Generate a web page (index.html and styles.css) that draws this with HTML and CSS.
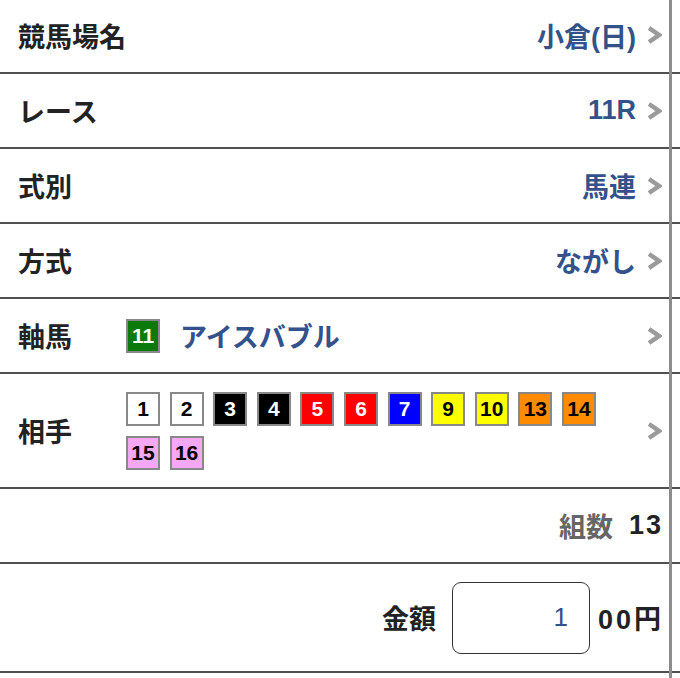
FILE: index.html
```html
<!DOCTYPE html>
<html lang="ja">
<head>
    <meta charset="UTF-8">
    <meta name="viewport" content="width=device-width, initial-scale=1.0">
    <title>投票内容</title>
    <link rel="stylesheet" href="styles.css">
</head>
<body>
    <div class="bet-form">
        <div class="row row-first">
            <span class="label">競馬場名</span>
            <span class="value">小倉(日)</span>
            <svg class="chevron" viewBox="0 0 16 20"><polyline points="3,3 13,10 3,17"/></svg>
        </div>
        <div class="row">
            <span class="label">レース</span>
            <span class="value">11R</span>
            <svg class="chevron" viewBox="0 0 16 20"><polyline points="3,3 13,10 3,17"/></svg>
        </div>
        <div class="row">
            <span class="label">式別</span>
            <span class="value">馬連</span>
            <svg class="chevron" viewBox="0 0 16 20"><polyline points="3,3 13,10 3,17"/></svg>
        </div>
        <div class="row">
            <span class="label">方式</span>
            <span class="value">ながし</span>
            <svg class="chevron" viewBox="0 0 16 20"><polyline points="3,3 13,10 3,17"/></svg>
        </div>
        <div class="row">
            <span class="label">軸馬</span>
            <div class="axis">
                <span class="num waku-6">11</span>
                <span class="horse-name">アイスバブル</span>
            </div>
            <svg class="chevron" viewBox="0 0 16 20"><polyline points="3,3 13,10 3,17"/></svg>
        </div>
        <div class="row row-partners">
            <span class="label">相手</span>
            <div class="partners">
                <span class="num waku-1">1</span>
                <span class="num waku-1">2</span>
                <span class="num waku-2">3</span>
                <span class="num waku-2">4</span>
                <span class="num waku-3">5</span>
                <span class="num waku-3">6</span>
                <span class="num waku-4">7</span>
                <span class="num waku-5">9</span>
                <span class="num waku-5">10</span>
                <span class="num waku-7">13</span>
                <span class="num waku-7">14</span>
                <span class="num waku-8">15</span>
                <span class="num waku-8">16</span>
            </div>
            <svg class="chevron" viewBox="0 0 16 20"><polyline points="3,3 13,10 3,17"/></svg>
        </div>
        <div class="row row-right">
            <span class="count-label">組数</span>
            <span class="count">13</span>
        </div>
        <div class="row row-right row-amount">
            <span class="amount-label">金額</span>
            <input class="amount-input" type="text" value="1">
            <span class="amount-unit">00円</span>
        </div>
    </div>
</body>
</html>
```

FILE: styles.css
```css
body {
    margin: 0;
    background-color: #fff;
    font-family: "Liberation Sans", "Noto Sans CJK JP", sans-serif;
    color: #222;
}

.bet-form {
    position: relative;
    width: 680px;
    height: 678px;
    overflow: hidden;
}

/* scroll edge on the right */
.bet-form::after {
    content: '';
    position: absolute;
    top: 0;
    bottom: 0;
    left: 669px;
    width: 3px;
    background-color: #8c8c8c;
}

.row {
    display: flex;
    align-items: center;
    box-sizing: border-box;
    height: 75px;
    padding: 0 18px 0 18px;
    border-bottom: 2px solid #505050;
    font-size: 27px;
    font-weight: bold;
    white-space: nowrap;
}

.row-first {
    height: 74px;
    padding-bottom: 2px;
}

.label {
    width: 108px;
    flex-shrink: 0;
}

.value {
    margin-left: auto;
    color: #33518a;
}

.chevron {
    width: 16px;
    height: 20px;
    margin-left: 10px;
    flex-shrink: 0;
}

.chevron polyline {
    fill: none;
    stroke: #9b9b9b;
    stroke-width: 4.5;
}

.axis {
    display: flex;
    align-items: center;
    gap: 20px;
    margin-right: auto;
}

.horse-name {
    color: #33518a;
}

.row-partners {
    height: 115px;
}

.partners {
    display: flex;
    flex-wrap: wrap;
    gap: 10px 9.6px;
    width: 480px;
    margin-right: auto;
}

.num {
    display: flex;
    align-items: center;
    justify-content: center;
    box-sizing: border-box;
    width: 34px;
    height: 34px;
    border: 2px solid #888;
    font-family: "Liberation Sans", sans-serif;
    font-size: 21px;
    font-weight: bold;
}

.waku-1 { background-color: #fff; color: #000; }
.waku-2 { background-color: #000; color: #fff; }
.waku-3 { background-color: #f00; color: #fff; }
.waku-4 { background-color: #00f; color: #fff; }
.waku-5 { background-color: #ff0; color: #000; }
.waku-6 { background-color: #0a7a0a; color: #fff; }
.waku-7 { background-color: #ff8c00; color: #000; }
.waku-8 { background-color: #f5a8f5; color: #000; }

.row-right {
    justify-content: flex-end;
    padding-right: 19px;
}

.count-label {
    color: #666;
    margin-right: 16px;
}

.count {
    letter-spacing: 2px;
    margin-right: -2px;
}

.row-amount {
    height: 109px;
}

.amount-label {
    margin-right: 16px;
}

.amount-input {
    box-sizing: border-box;
    width: 138px;
    height: 72px;
    padding: 0 21px 0 0;
    border: 1.5px solid #333;
    border-radius: 9px;
    font-family: "Liberation Sans", sans-serif;
    font-size: 26px;
    color: #33518a;
    text-align: right;
    outline: none;
}

.amount-unit {
    margin-left: 8px;
    letter-spacing: 3px;
    margin-right: -3px;
}
```
